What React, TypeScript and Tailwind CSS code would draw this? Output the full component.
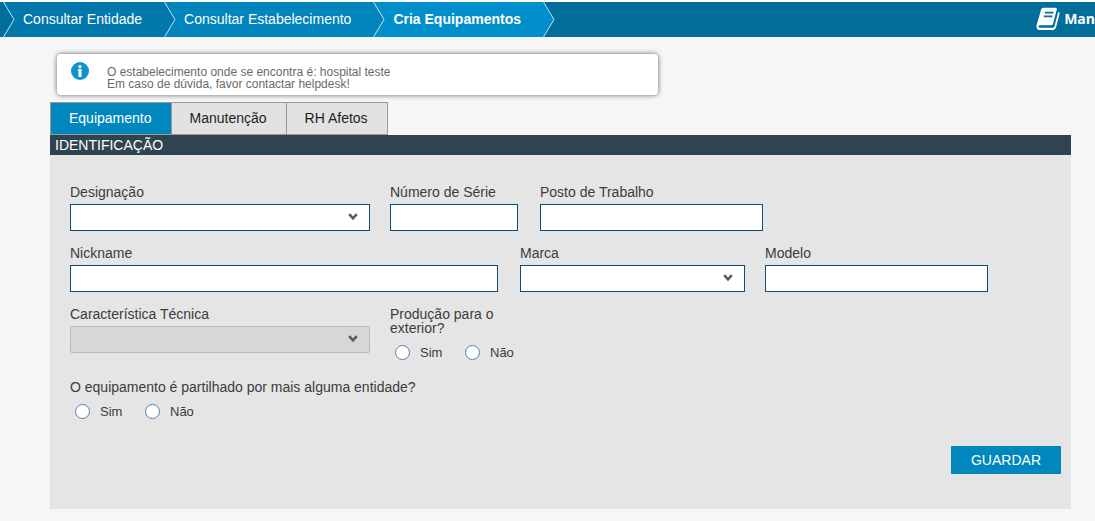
import { useId, useState } from "react";
import type { ReactNode } from "react";
import clsx from "clsx";

type CrumbProps = {
  label: string;
  current?: boolean;
  className: string;
  arrowClass: string;
};

/* Arrow tip painted in the colour of the preceding step */
function Arrow({ className }: { className: string }) {
  return (
    <svg viewBox="0 0 12 35" className={clsx("h-[35px] w-3 shrink-0", className)} aria-hidden="true">
      <path d="M0 0 L11 17.5 L0 35 Z" fill="currentColor" />
      <path d="M0.5 0 L11 17.5 L0.5 35" fill="none" stroke="#b9e6f5" strokeWidth="1" />
    </svg>
  );
}

function Crumb({ label, current, className, arrowClass }: CrumbProps) {
  return (
    <li className={clsx("flex items-center pr-[22px]", className)}>
      <Arrow className={arrowClass} />
      <a
        href="#"
        aria-current={current ? "page" : undefined}
        className={clsx("pb-0.5 pl-2 whitespace-nowrap", current && "font-bold")}
      >
        {label}
      </a>
    </li>
  );
}

function Field({ label, id, className, children }: { label: string; id: string; className: string; children: ReactNode }) {
  return (
    <div className={clsx("min-w-0", className)}>
      <label htmlFor={id} className="mb-[5px] block leading-[14px]">
        {label}
      </label>
      {children}
    </div>
  );
}

function TextField({ label, className }: { label: string; className: string }) {
  const id = useId();
  return (
    <Field label={label} id={id} className={clsx("pr-0.5", className)}>
      <input
        id={id}
        type="text"
        className="block h-[27px] w-full border border-[#0b4f78] bg-white px-2 outline-none focus:border-[#0087be]"
      />
    </Field>
  );
}

function SelectField({ label, className, disabled }: { label: string; className: string; disabled?: boolean }) {
  const id = useId();
  return (
    <Field label={label} id={id} className={className}>
      <div className="relative">
        <select
          id={id}
          disabled={disabled}
          className={clsx(
            "block h-[27px] w-full appearance-none border px-2 opacity-100 outline-none",
            disabled ? "rounded-[2px] border-[#b9b9b9] bg-[#d7d7d7]" : "border-[#0b4f78] bg-white",
          )}
        >
          <option value=""></option>
        </select>
        <svg viewBox="0 0 10 8" className="pointer-events-none absolute top-[9px] right-3 h-2 w-2.5" aria-hidden="true">
          <path d="M1.2 1.2 L5 5.4 L8.8 1.2" fill="none" stroke="#5c5c5c" strokeWidth="2.6" />
        </svg>
      </div>
    </Field>
  );
}

function YesNo({ legend, className }: { legend: string; className?: string }) {
  const name = useId();
  return (
    <fieldset className={clsx("min-w-0", className)}>
      <legend className="leading-[14px]">{legend}</legend>
      <div className="flex pt-2.5 pl-[5px]">
        {["Sim", "Não"].map((option) => (
          <label key={option} className="flex w-[70px] shrink-0 items-center gap-2.5 text-[13px] leading-[15px]">
            <input
              type="radio"
              name={name}
              value={option}
              className="size-[15px] shrink-0 appearance-none rounded-full border border-[#5580b0] bg-white checked:border-4"
            />
            {option}
          </label>
        ))}
      </div>
    </fieldset>
  );
}

const tabs = ["Equipamento", "Manutenção", "RH Afetos"];

export default function App() {
  const [active, setActive] = useState(tabs[0]);

  return (
    <div className="min-h-screen bg-[#f6f6f6] pb-3 font-['Liberation_Sans',Arial,sans-serif] text-sm text-[#3c3c3c]">
      <header className="flex h-[37px] items-center justify-between overflow-hidden border-t-2 border-white bg-[#006d9a] text-white">
        <nav aria-label="Navegação">
          <ol className="flex pl-[3px]">
            <Crumb label="Consultar Entidade" className="bg-[#0078ab]" arrowClass="text-[#006d9a]" />
            <Crumb label="Consultar Estabelecimento" className="bg-[#0084bb]" arrowClass="text-[#0078ab]" />
            <Crumb label="Cria Equipamentos" current className="bg-[#008fca]" arrowClass="text-[#0084bb]" />
            <li aria-hidden="true">
              <Arrow className="text-[#008fca]" />
            </li>
          </ol>
        </nav>
        <a href="#" className="flex items-center gap-1 pb-0.5 font-['Open_Sans',sans-serif] font-bold">
          <svg viewBox="0 0 25 24" className="h-6 w-[25px]" aria-hidden="true">
            <path
              d="M8.5 0.8 H20.6 Q22.2 0.8 21.8 2.4 L18 17 Q17.6 18.3 16.2 18.3 H5.2 Q3.4 18.3 3.4 19.6 Q3.4 20.7 4.8 20.7 H17.6 Q19 20.7 19.4 19.4 L23.2 5 Q25 5.2 24.6 6.8 L21 20.6 Q20.3 23 18 23 H4.6 Q1.4 23 1.5 19 Q1.6 17.5 2.4 15.6 L6 2.8 Q6.5 0.8 8.5 0.8 Z"
              fill="white"
            />
            <path d="M9.8 5.6 H18.4 M8.8 9.4 H17.4" stroke="#006d9a" strokeWidth="1.6" />
          </svg>
          Man
        </a>
      </header>

      <main className="mr-6 ml-[50px]">
        <div
          role="status"
          className="mt-[17px] ml-[7px] flex min-h-[41px] max-w-[601px] rounded bg-white pt-2 pl-3.5 shadow-[0_0_5px_rgba(0,0,0,0.6)]"
        >
          <svg viewBox="0 0 18 18" className="size-[18px] shrink-0" aria-hidden="true">
            <circle cx="9" cy="9" r="9" fill="#0d94cb" />
            <circle cx="9" cy="4.5" r="1.6" fill="white" />
            <path d="M7 7 H10.5 V15 H7.5 V8.4 H7 Z" fill="white" />
          </svg>
          <p className="pt-1 pl-[18px] text-xs leading-3 text-[#6a6a6a]">
            O estabelecimento onde se encontra é: hospital teste
            <br />
            Em caso de dúvida, favor contactar helpdesk!
          </p>
        </div>

        <div role="tablist" className="mt-[7px] flex">
          {tabs.map((tab) => (
            <button
              key={tab}
              type="button"
              role="tab"
              aria-selected={tab === active}
              onClick={() => setActive(tab)}
              className={clsx(
                "h-[33px] border border-l-0 border-[#999] pr-[19px] pb-0.5 pl-[18px] first:border-l",
                tab === active ? "bg-[#0087be] text-white" : "bg-[#e2e2e2] text-[#1e1e1e]",
              )}
            >
              {tab}
            </button>
          ))}
        </div>

        <section className="bg-[#e5e5e5]">
          <h2 className="bg-[#2f4351] px-[5px] leading-5 text-white">IDENTIFICAÇÃO</h2>
          <form className="pt-[30px] pr-2.5 pb-[35px] pl-5" onSubmit={(e) => e.preventDefault()}>
            <div className="flex flex-col gap-[15px]">
              <div className="flex gap-5">
                <SelectField label="Designação" className="w-[300px]" />
                <TextField label="Número de Série" className="w-[130px]" />
                <TextField label="Posto de Trabalho" className="w-[225px]" />
              </div>
              <div className="flex gap-5">
                <TextField label="Nickname" className="w-[430px]" />
                <SelectField label="Marca" className="w-[225px]" />
                <TextField label="Modelo" className="w-[225px]" />
              </div>
              <div className="flex gap-5">
                <SelectField label="Característica Técnica" className="w-[300px]" disabled />
                <YesNo legend="Produção para o exterior?" className="w-[130px]" />
              </div>
            </div>
            <YesNo legend="O equipamento é partilhado por mais alguma entidade?" className="mt-5" />
            <div className="mt-[27px] flex justify-end">
              <button type="submit" className="h-7 bg-[#0087be] px-5 text-white">
                GUARDAR
              </button>
            </div>
          </form>
        </section>
      </main>
    </div>
  );
}
